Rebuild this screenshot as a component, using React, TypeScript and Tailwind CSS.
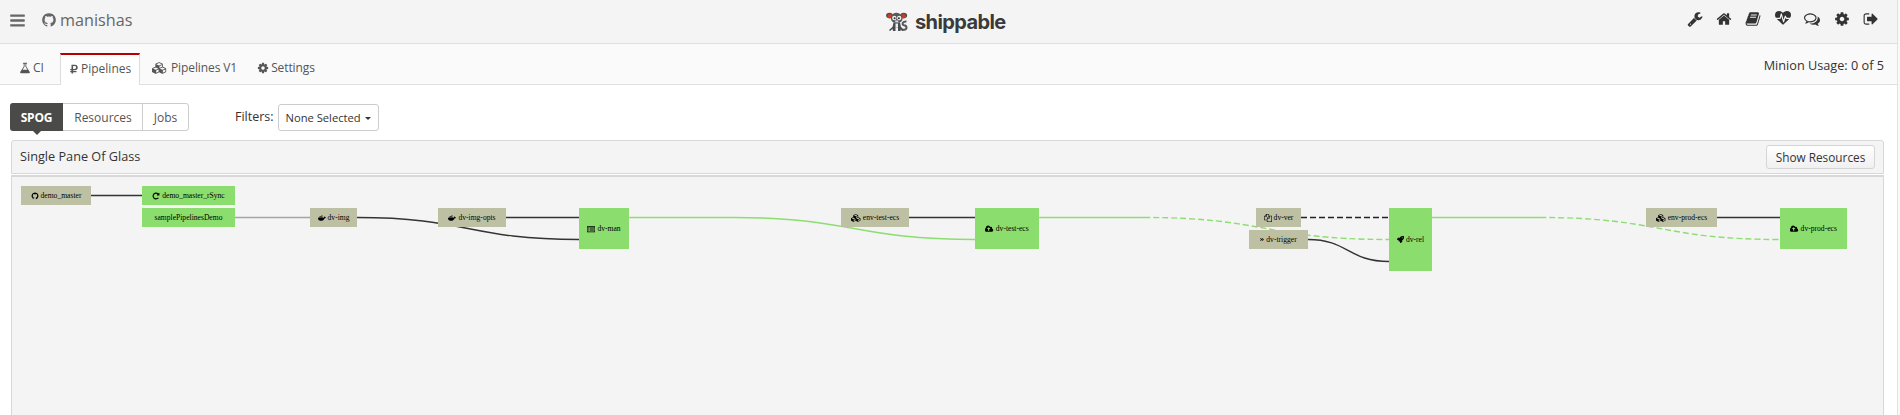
import React from "react";
import { FaAngleDoubleRight, FaDocker, FaRocket, FaRubleSign } from "react-icons/fa";

const paths = {
  bars: "M1664 1344v128q0 26-19 45t-45 19h-1408q-26 0-45-19t-19-45v-128q0-26 19-45t45-19h1408q26 0 45 19t19 45zm0-512v128q0 26-19 45t-45 19h-1408q-26 0-45-19t-19-45v-128q0-26 19-45t45-19h1408q26 0 45 19t19 45zm0-512v128q0 26-19 45t-45 19h-1408q-26 0-45-19t-19-45v-128q0-26 19-45t45-19h1408q26 0 45 19t19 45z",
  home: "M1472 992v480q0 26-19 45t-45 19h-384v-384h-256v384h-384q-26 0-45-19t-19-45v-480q0-1 .5-3t.5-3l575-474 575 474q1 2 1 6zm223-69l-62 74q-8 9-21 11h-3q-13 0-21-7l-692-577-692 577q-12 8-24 7-13-2-21-11l-62-74q-8-10-7-23.5t11-21.5l719-599q32-26 76-26t76 26l244 204v-195q0-14 9-23t23-9h192q14 0 23 9t9 23v408l219 182q10 8 11 21.5t-7 23.5z",
  wrench: "M448 1472q0-26-19-45t-45-19-45 19-19 45 19 45 45 19 45-19 19-45zm644-420l-682 682q-37 37-90 37-52 0-91-37l-106-108q-38-36-38-90 0-53 38-91l681-681q39 98 114.5 173.5t173.5 114.5zm634-435q0 39-23 106-47 134-164.5 217.5t-258.5 83.5q-185 0-316.5-131.5t-131.5-316.5 131.5-316.5 316.5-131.5q58 0 121.5 16.5t107.5 46.5q16 11 16 28t-16 28l-293 169v224l193 107q5-3 79-48.5t135.5-81 70.5-35.5q15 0 23.5 10t8.5 25z",
  book: "M1703 478q40 57 18 129l-275 906q-19 64-76.5 107.5t-122.5 43.5h-923q-77 0-148.5-53.5t-99.5-131.5q-24-67-2-127 0-4 3-27t4-37q1-8-3-21.5t-3-19.5q2-11 8-21t16.5-23.5 16.5-23.5q23-38 45-91.5t30-91.5q3-10 .5-30t-.5-28q3-11 17-28t17-23q21-36 42-92t25-90q1-9-2.5-32t.5-28q4-13 22-30.5t22-22.5q19-26 42.5-84.5t27.5-96.5q1-8-3-25.5t-2-26.5q2-8 9-18t18-23 17-21q8-12 16.5-30.5t15-35 16-36 19.5-32 26.5-23.5 36-11.5 47.5 5.5l-1 3q38-9 51-9h761q74 0 114 56t18 130l-274 906q-36 119-71.5 153.5t-128.5 34.5h-869q-27 0-38 15-11 16-1 43 24 70 144 70h923q29 0 56-15.5t35-41.5l300-987q7-22 5-57 38 15 59 43zm-1064 2q-4 13 2 22.5t20 9.5h608q13 0 25.5-9.5t16.5-22.5l21-64q4-13-2-22.5t-20-9.5h-608q-13 0-25.5 9.5t-16.5 22.5zm-83 256q-4 13 2 22.5t20 9.5h608q13 0 25.5-9.5t16.5-22.5l21-64q4-13-2-22.5t-20-9.5h-608q-13 0-25.5 9.5t-16.5 22.5z",
  cog: "M1152 896q0-106-75-181t-181-75-181 75-75 181 75 181 181 75 181-75 75-181zm512-109v222q0 12-8 23t-20 13l-185 28q-19 54-39 91 35 50 107 138 10 12 10 25t-9 23q-27 37-99 108t-94 71q-12 0-26-9l-138-108q-44 23-91 38-16 136-29 186-7 28-36 28h-222q-14 0-24.5-8.5t-11.5-21.5l-28-184q-49-16-90-37l-141 107q-10 9-25 9-14 0-25-11-126-114-165-168-7-10-7-23 0-12 8-23 15-21 51-66.5t54-70.5q-27-50-41-99l-183-27q-13-2-21-12.5t-8-23.5v-222q0-12 8-23t19-13l186-28q14-46 39-92-40-57-107-138-10-12-10-24 0-10 9-23 26-36 98.5-107.5t94.5-71.5q13 0 26 10l138 107q44-23 91-38 16-136 29-186 7-28 36-28h222q14 0 24.5 8.5t11.5 21.5l28 184q49 16 90 37l142-107q9-9 24-9 13 0 25 10 129 119 165 170 7 8 7 22 0 12-8 23-15 21-51 66.5t-54 70.5q26 50 41 98l183 28q13 2 21 12.5t8 23.5z",
  signOut: "M704 1440q0 4 1 20t.5 26.5-3 23.5-10 19.5-20.5 6.5h-320q-119 0-203.5-84.5t-84.5-203.5v-704q0-119 84.5-203.5t203.5-84.5h320q13 0 22.5 9.5t9.5 22.5q0 4 1 20t.5 26.5-3 23.5-10 19.5-20.5 6.5h-320q-66 0-113 47t-47 113v704q0 66 47 113t113 47h312l11.5 1 11.5 3 8 5.5 7 9 2 13.5zm928-544q0 26-19 45l-544 544q-19 19-45 19t-45-19-19-45v-288h-448q-26 0-45-19t-19-45v-384q0-26 19-45t45-19h448v-288q0-26 19-45t45-19 45 19l544 544q19 19 19 45z",
  heartbeat: "M1280 896h305q-5 6-10 10.5t-9 7.5l-3 4-623 600q-18 18-44 18t-44-18l-624-602q-5-2-21-20h369q22 0 39.5-13.5t22.5-34.5l70-281 190 667q6 20 23 33t39 13q21 0 38-13t23-33l146-485 56 112q18 35 57 35zm512-428q0 145-103 300h-369l-111-221q-8-17-25.5-27t-36.5-8q-45 5-56 46l-129 430-196-686q-6-20-23.5-33t-39.5-13-39 13.5-22 34.5l-116 464h-423q-103-155-103-300 0-220 127-344t351-124q62 0 126.5 21.5t120 58 95.5 68.5 76 68q36-36 76-68t95.5-68.5 120-58 126.5-21.5q224 0 351 124t127 344z",
  comments: "M704 384q-153 0-286 52t-211.5 141-78.5 191q0 82 53 158t149 132l97 56-35 84q34-20 62-39l44-31 53 10q78 14 153 14 153 0 286-52t211.5-141 78.5-191-78.5-191-211.5-141-286-52zm0-128q191 0 353.5 68.5t256.5 186.5 94 257-94 257-256.5 186.5-353.5 68.5q-86 0-176-16-124 88-278 128-36 9-86 16h-3q-11 0-20.5-8t-11.5-21q-1-3-1-6.5t.5-6.5 2-6l2.5-5 3.5-5.5 4-5 4.5-5 4-4.5q5-6 23-25t26-29.5 22.5-29 25-38.5 20.5-44q-124-72-195-177t-71-224q0-139 94-257t256.5-186.5 353.5-68.5zm822 1169q10 24 20.5 44t25 38.5 22.5 29 26 29.5 23 25q1 1 4 4.5t4.5 5 4 5 3.5 5.5l2.5 5 2 6 .5 6.5-1 6.5q-3 14-13 22t-22 7q-50-7-86-16-154-40-278-128-90 16-176 16-271 0-472-132 58 4 88 4 161 0 309-45t264-129q125-92 192-212t67-254q0-77-23-152 129 71 204 178t75 230q0 120-71 224.5t-195 176.5z",
  github: "M896 128q209 0 385.5 103t279.5 279.5 103 385.5q0 251-146.5 451.5t-378.5 277.5q-27 5-40-7t-13-30q0-3 .5-76.5t.5-134.5q0-97-52-142 57-6 102.5-18t94-39 81-66.5 53-105 20.5-150.5q0-119-79-206 37-91-8-204-28-9-81 11t-92 44l-38 24q-93-26-192-26t-192 26q-16-11-42.5-27t-83.5-38.5-85-13.5q-45 113-8 204-79 87-79 206 0 85 20.5 150t52.5 105 80.5 67 94 39 102.5 18q-39 36-49 103-21 10-45 15t-57 5-65.5-21.5-55.5-62.5q-19-32-48.5-52t-49.5-24l-20-3q-21 0-29 4.5t-5 11.5 9 14 13 12l7 5q22 10 43.5 38t31.5 51l10 23q13 38 44 61.5t67 30 69.5 7 55.5-3.5l23-4q0 38 .5 88.5t.5 54.5q0 18-13 30t-40 7q-232-77-378.5-277.5t-146.5-451.5q0-209 103-385.5t279.5-279.5 385.5-103z",
  flask: "M1591 1448q56 89 21.5 152.5t-140.5 63.5h-1152q-106 0-140.5-63.5t21.5-152.5l503-793v-399h-64q-26 0-45-19t-19-45 19-45 45-19h512q26 0 45 19t19 45-19 45-45 19h-64v399zm-779-725l-272 429h712l-272-429-20-31v-436h-128v436z",
  cubes: "M640 1632l384-192v-314l-384 164v342zm-64-454l404-173-404-173-404 173zm1088 454l384-192v-314l-384 164v342zm-64-454l404-173-404-173-404 173zm-448-293l384-165v-266l-384 164v267zm-64-379l441-189-441-189-441 189zm1088 518v416q0 36-19 67t-52 47l-448 224q-25 14-57 14t-57-14l-448-224q-5-2-7-4-2 2-7 4l-448 224q-25 14-57 14t-57-14l-448-224q-33-16-52-47t-19-67v-416q0-38 21.5-70t56.5-48l434-186v-400q0-38 21.5-70t56.5-48l448-192q23-10 50-10t50 10l448 192q35 16 56.5 48t21.5 70v400l434 186q36 16 57 48t21 70z",
  repeat: "M1664 256v448q0 26-19 45t-45 19h-448q-42 0-59-40-17-39 14-69l138-138q-148-137-349-137-104 0-198.5 40.5t-163.5 109.5-109.5 163.5-40.5 198.5 40.5 198.5 109.5 163.5 163.5 109.5 198.5 40.5q119 0 225-52t179-147q7-10 23-12 15 0 25 9l137 138q9 8 9.5 20.5t-7.5 22.5q-109 132-264 204.5t-327 72.5q-156 0-298-61t-245-164-164-245-61-298 61-298 164-245 245-164 298-61q147 0 284.5 55.5t244.5 156.5l130-129q29-31 70-14 39 17 39 59z",
  files: "M1696 384q40 0 68 28t28 68v1216q0 40-28 68t-68 28h-960q-40 0-68-28t-28-68v-288h-544q-40 0-68-28t-28-68v-672q0-40 20-88t48-76l408-408q28-28 76-48t88-20h416q40 0 68 28t28 68v328q68-40 128-40h416zm-544 213l-299 299h299v-299zm-640-384l-299 299h299v-299zm196 647l316-316v-416h-384v416q0 40-28 68t-68 28h-416v640h512v-256q0-40 20-88t48-76zm956 804v-1152h-384v416q0 40-28 68t-68 28h-416v640h896z",
  cloud: "M1216 864q0-14-9-23l-352-352q-9-9-23-9t-23 9l-351 351q-10 12-10 24 0 14 9 23t23 9h224v352q0 13 9.5 22.5t22.5 9.5h192q13 0 22.5-9.5t9.5-22.5v-352h224q13 0 22.5-9.5t9.5-22.5zm640 288q0 159-112.5 271.5t-271.5 112.5h-1088q-185 0-316.5-131.5t-131.5-316.5q0-130 70-240t188-165q-2-30-2-43 0-212 150-362t362-150q156 0 285.5 87t188.5 231q71-62 166-62 106 0 181 75t75 181q0 76-41 138 130 31 213.5 135.5t83.5 238.5z",
  list: "M0 256h1792v1344h-1792zM128 512v960h1536v-960zM256 640h192v128h-192zM576 640h960v128h-960zM256 896h192v128h-192zM576 896h960v128h-960zM256 1152h192v128h-192zM576 1152h960v128h-960z",
};

const boxes: Partial<Record<keyof typeof paths, string>> = {
  cubes: "0 0 2304 1792",
  cloud: "0 0 1920 1792",
};

function Icon({ name, className }: { name: keyof typeof paths; className: string }) {
  return (
    <svg viewBox={boxes[name] ?? "0 0 1792 1792"} fill="currentColor" fillRule={name === "list" ? "evenodd" : undefined} className={"shrink-0 " + className}>
      <path d={paths[name]} />
    </svg>
  );
}

function Mascot() {
  return (
    <svg viewBox="0 0 22 20" className="h-5 w-[22px] shrink-0">
      <path d="M15.500 17.800h2.500q2.500-.3 2.500-2.300t-2.500-2.300q-2-.5-1.200-2.200t3.700-1.500" fill="none" stroke="#55585a" strokeWidth="2" />
      <ellipse cx="3.500" cy="3.500" rx="3.400" ry="2.700" fill="#4a4d4f" />
      <ellipse cx="17.700" cy="3.500" rx="3.400" ry="2.700" fill="#4a4d4f" />
      <ellipse cx="3.900" cy="4.200" rx="2.500" ry="2.300" fill="#cf3a20" />
      <ellipse cx="17.300" cy="4.200" rx="2.500" ry="2.300" fill="#cf3a20" />
      <path d="M5 5Q7 .5 10.800 .8T16.500 5Q17 9 14 10.500H7.500Q4.500 9 5 5z" fill="#55585a" />
      <circle cx="8.300" cy="6" r="2.200" fill="#eee" />
      <circle cx="13.200" cy="6" r="2.200" fill="#eee" />
      <circle cx="8.600" cy="6.200" r="1" fill="#333" />
      <circle cx="12.900" cy="6.200" r="1" fill="#333" />
      <path d="M9 8.500h3.500l-.5 2h-2.500z" fill="#ddd" />
      <path d="M7.500 10.500h6.500l1.200 5.500-.7 3h-2.500v-3.500h-2.500v3.500h-2.500l-.7-3z" fill="#4a4d4f" />
      <path d="M3.500 18.500l3.500-3M17 18.500l-2.500-3" stroke="#444" strokeWidth="1.500" />
      <path d="M9.500 11.500h2.500v4h-2.500z" fill="#eee" />
    </svg>
  );
}

type NodeSpec = { label: string; place: string; green?: boolean; icon?: React.ReactNode };

const nodes: NodeSpec[] = [
  { label: "demo_master", place: "left-[9px] top-[9px] w-[70px] h-[19px]", icon: <Icon name="github" className="size-[8px]" /> },
  { label: "demo_master_rSync", place: "left-[130px] top-[9px] w-[93px] h-[19px]", green: true, icon: <Icon name="repeat" className="size-[8px]" /> },
  { label: "samplePipelinesDemo", place: "left-[130px] top-[31px] w-[93px] h-[19px]", green: true },
  { label: "dv-img", place: "left-[298px] top-[31px] w-[47px] h-[19px]", icon: <FaDocker className="size-[8px]" /> },
  { label: "dv-img-opts", place: "left-[426px] top-[31px] w-[68px] h-[19px]", icon: <FaDocker className="size-[8px]" /> },
  { label: "dv-man", place: "left-[567px] top-[31px] w-[50px] h-[41px]", green: true, icon: <Icon name="list" className="size-[8px]" /> },
  { label: "env-test-ecs", place: "left-[829px] top-[31px] w-[68px] h-[19px]", icon: <Icon name="cubes" className="h-[8px] w-[10px]" /> },
  { label: "dv-test-ecs", place: "left-[963px] top-[31px] w-[64px] h-[41px]", green: true, icon: <Icon name="cloud" className="h-[8px] w-[8.500px]" /> },
  { label: "dv-ver", place: "left-[1244px] top-[31px] w-[45px] h-[19px]", icon: <Icon name="files" className="size-[8px]" /> },
  { label: "dv-trigger", place: "left-[1237px] top-[53px] w-[59px] h-[19px]", icon: <FaAngleDoubleRight className="h-[7px] w-[4px]" /> },
  { label: "dv-rel", place: "left-[1377px] top-[31px] w-[43px] h-[63px]", green: true, icon: <FaRocket className="size-[7px]" /> },
  { label: "env-prod-ecs", place: "left-[1634px] top-[31px] w-[71px] h-[19px]", icon: <Icon name="cubes" className="h-[8px] w-[10px]" /> },
  { label: "dv-prod-ecs", place: "left-[1768px] top-[31px] w-[67px] h-[41px]", green: true, icon: <Icon name="cloud" className="h-[8px] w-[8.500px]" /> },
];

const edges: { d: string; stroke: string; dash?: boolean }[] = [
  { d: "M79 18.500H130", stroke: "#333" },
  { d: "M223 40.500H298", stroke: "#a0a8a5" },
  { d: "M345 40.500C456 40.500 456 62.500 567 62.500", stroke: "#333" },
  { d: "M494 40.500H567", stroke: "#333" },
  { d: "M617 40.500H721C842 40.500 842 62.500 963 62.500", stroke: "#8bde6f" },
  { d: "M897 40.500H963", stroke: "#333" },
  { d: "M1027 40.500H1132", stroke: "#8bde6f" },
  { d: "M1132 40.500C1254 40.500 1254 62.500 1377 62.500", stroke: "#8bde6f", dash: true },
  { d: "M1289 40.500H1377", stroke: "#222", dash: true },
  { d: "M1296 62.500C1336 62.500 1336 84.500 1377 84.500", stroke: "#333" },
  { d: "M1420 40.500H1528", stroke: "#8bde6f" },
  { d: "M1528 40.500C1648 40.500 1648 62.500 1768 62.500", stroke: "#8bde6f", dash: true },
  { d: "M1705 40.500H1768", stroke: "#333" },
];

export default function App() {
  return (
    <div className="flex h-[415px] w-[1900px] overflow-hidden bg-[#f9f9f9] font-['Open_Sans',sans-serif] text-[#333]">
      <div className="flex w-[1898px] flex-col border-r border-[#e2e2e2] bg-white">
        <header className="flex h-11 shrink-0 items-center border-b border-[#e0e0e0] bg-[#f4f4f4] text-[#666]">
          <div className="mb-[3px] flex w-[886px] items-center pl-[9px]">
            <Icon name="bars" className="size-[17px]" />
            <Icon name="github" className="ml-[15px] size-[16px]" />
            <span className="ml-[3px] text-[16.200px] leading-none">manishas</span>
          </div>
          <div className="flex items-center gap-[7px] text-[#3a3a3a]">
            <Mascot />
            <span className="font-['Inter',sans-serif] text-[20px] font-bold leading-none tracking-[-0.600px]">shippable</span>
          </div>
          <nav className="mb-[5px] ml-auto mr-[18px] flex items-center gap-[13.400px] text-[#333]">
            <Icon name="wrench" className="size-4" />
            <Icon name="home" className="size-4" />
            <Icon name="book" className="size-4" />
            <Icon name="heartbeat" className="size-4" />
            <Icon name="comments" className="size-4" />
            <Icon name="cog" className="size-4" />
            <Icon name="signOut" className="size-4" />
          </nav>
        </header>

        <div className="flex h-[41px] shrink-0 items-end border-b border-[#e0e0e0] bg-[#fafafa] text-[12px] text-[#555]">
          <div className="flex h-8 w-[60px] items-center gap-[2px] pl-[19px]">
            <Icon name="flask" className="size-3" />
            <span>CI</span>
          </div>
          <div className="-mb-px flex h-8 w-[80px] items-center gap-[3px] border-x border-t-2 border-x-[#ddd] border-t-[#b70000] bg-white pb-[3px] pl-[9px]">
            <FaRubleSign className="h-[10px] w-2" />
            <span>Pipelines</span>
          </div>
          <div className="flex h-8 items-center gap-1 pl-3">
            <Icon name="cubes" className="h-3 w-[15px]" />
            <span className="tracking-[-0.100px]">Pipelines V1</span>
          </div>
          <div className="flex h-8 items-center gap-[2px] pl-5">
            <Icon name="cog" className="size-3" />
            <span className="tracking-[-0.100px]">Settings</span>
          </div>
          <span className="mb-[10px] ml-auto mr-[13px] text-[12.700px] leading-[18px] text-[#333]">Minion Usage: 0 of 5</span>
        </div>

        <div className="flex h-[55px] shrink-0 items-start pl-[10px] pt-[18px] text-[12px] text-[#555]">
          <div className="flex h-7 rounded-[3px] border border-[#ccc]">
            <div className="relative -my-px -ml-px flex w-[53px] items-center justify-center rounded-l-[3px] bg-[#4a4a48] pt-px font-bold tracking-[-0.200px] text-white">
              SPOG
              <svg viewBox="0 0 8 4" className="absolute -bottom-1 left-[23px] h-1 w-2">
                <path d="M0 0h8L4 4z" fill="#4a4a48" />
              </svg>
            </div>
            <div className="flex w-[80px] items-center justify-center border-r border-[#ccc] pl-px pt-[2px]">Resources</div>
            <div className="flex w-[45px] items-center justify-center pt-[2px]">Jobs</div>
          </div>
          <span className="ml-[46px] mt-[5px] text-[12.500px] leading-[18px] text-[#333]">Filters:</span>
          <div className="ml-1 mt-px flex h-[27px] w-[101px] items-center justify-center gap-1 rounded-[3px] border border-[#ccc] pt-px text-[11.200px] text-[#333]">
            None Selected
            <svg viewBox="0 0 6 3" className="h-[3px] w-[6px]">
              <path d="M0 0h6L3 3z" fill="#333" />
            </svg>
          </div>
        </div>

        <section className="ml-[11px] flex w-[1873px] grow flex-col">
          <div className="flex h-[34px] shrink-0 items-center justify-between rounded-t-[3px] border border-[#d8d8d8] bg-[#f4f4f4] pl-2 pr-2">
            <h1 className="text-[12.700px]">Single Pane Of Glass</h1>
            <button className="flex h-6 w-[109px] items-center justify-center rounded-[3px] border border-[#d5d5d5] bg-linear-to-b from-white to-[#f0f0f0] pt-px text-[11.800px]">
              Show Resources
            </button>
          </div>
          <div className="relative mt-px grow border-x border-t-2 border-[#d8d8d8] bg-[#f4f4f4]">
            <svg viewBox="0 0 1871 238" className="absolute left-0 top-0 h-[238px] w-[1871px]" fill="none">
              {edges.map((e) => (
                <path key={e.d} d={e.d} stroke={e.stroke} strokeWidth="1.400" strokeDasharray={e.dash ? "6 3" : undefined} />
              ))}
            </svg>
            {nodes.map((n) => (
              <div
                key={n.label}
                className={
                  "absolute flex items-center justify-center gap-[2px] whitespace-nowrap font-['Liberation_Serif',serif] text-[7.600px] leading-none text-black " +
                  (n.green ? "bg-[#8bdd6e] " : "bg-[#bdc0a3] ") +
                  n.place
                }
              >
                {n.icon}
                <span>{n.label}</span>
              </div>
            ))}
          </div>
        </section>
      </div>
    </div>
  );
}
